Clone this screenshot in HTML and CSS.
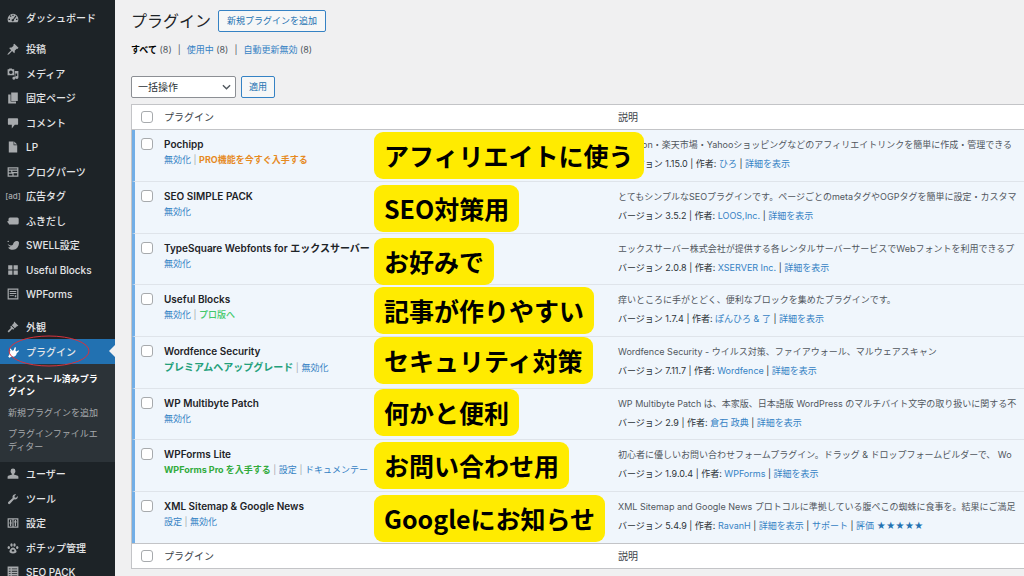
FILE: index.html
```html
<!DOCTYPE html>
<html lang="ja">
<head>
<meta charset="utf-8">
<title>プラグイン</title>
<link rel="stylesheet" href="styles.css">
</head>
<body>
<div class="layout">
<nav class="sidebar">
  <ul class="menu">
    <li><a href="#"><svg viewBox="0 0 20 20"><path fill-rule="evenodd" d="M10 3a9 9 0 0 0-9 9c0 2 .6 3.700 1.500 5h15c1-1.300 1.500-3 1.500-5a9 9 0 0 0-9-9zM9 4.500h2v2.200H9zM4.600 6.700l1.500-1.300 1.500 1.700-1.500 1.300zM2.700 11.200H5v2H2.700zM15 11.200h2.300v2H15zM14.300 5.800l1.300 1.500-4 5.200c.5 2-1 3-2 3-1.600 0-2.500-1.700-1.500-3 .5-.7 1.300-1 2.200-1z"/></svg>ダッシュボード</a></li>
  </ul>
  <ul class="menu menu-main">
    <li><a href="#"><svg viewBox="0 0 20 20"><path d="M10.400 3l1.900-1.900 6.900 6.900-1.900 1.900-1.200-.4-3.300 3.300c.5 1.700.2 3.200-.8 4.200l-3.500-3.500-4.700 4.700c-.8.800-2.600 1.700-2.900 1.400s.6-2.100 1.400-2.900L7 12 3.500 8.500c1-1 2.500-1.300 4.200-.8L11 4.400z"/></svg>投稿</a></li>
    <li><a href="#"><svg viewBox="0 0 20 20"><path fill-rule="evenodd" d="M1 2h2l1-1h4l1 1h3v10H1zM6.500 4a3 3 0 1 0 0 6 3 3 0 0 0 0-6zM13 5h6v11a2.500 2.500 0 1 1-2-2.500V9h-3v8a2.500 2.500 0 1 1-2-2.500h1z"/></svg>メディア</a></li>
    <li><a href="#"><svg viewBox="0 0 20 20"><path d="M7 1h11v14H7zM2 4h4v12h9v3H2z"/></svg>固定ページ</a></li>
    <li><a href="#"><svg viewBox="0 0 20 20"><path d="M3 2h14q1.500 0 1.500 1.500v8q0 1.500-1.500 1.500h-4l-5 6v-6H3q-1.500 0-1.500-1.500v-8Q1.500 2 3 2z"/></svg>コメント</a></li>
    <li><a href="#"><svg viewBox="0 0 20 20"><path d="M3 1h8v6h6v12H3zM12 1l5 5h-5z"/></svg>LP</a></li>
    <li><a href="#"><svg viewBox="0 0 20 20"><path fill-rule="evenodd" d="M1 2h18v16H1zM3 4v2h14V4zM3 8v3h4V8zM9 8v2h8V8zM3 13v3h6v-3zM11 12v4h6v-4z"/></svg>ブログパーツ</a></li>
    <li><a href="#"><span class="ad-icon" aria-hidden="true">[ad]</span>広告タグ</a></li>
    <li><a href="#"><svg viewBox="0 0 20 20"><path d="M5 4h12q2.500 0 2.500 2.500v7q0 2.500-2.500 2.500H5q-2 0-2.300-2L0 11l2.500-1V6.500Q2.500 4 5 4z"/></svg>ふきだし</a></li>
    <li><a href="#"><svg viewBox="0 0 20 20"><circle cx="2" cy="4" r="1.200"/><path d="M1 8c3 3 7 4 9 1 1-5 5-7 9-5l1 2c0 7-4 12-10 12-4 0-7-2-8-4 2 0 3 0 4-1-3-1-4-3-5-5z"/></svg>SWELL設定</a></li>
    <li><a href="#"><svg viewBox="0 0 20 20"><path d="M2 2h7v7H2zM11 2h7v7h-7zM2 11h7v7H2zM11 11h7v7h-7z"/></svg>Useful Blocks</a></li>
    <li><a href="#"><svg viewBox="0 0 20 20"><path fill-rule="evenodd" d="M1 1h18v18H1zM3 3v14h14V3zM4.500 5h11v1.500h-11zM4.500 8.500h11V10h-11zM4.500 12h7v1.500h-7zM13 12h2.500v3.500H13z"/></svg>WPForms</a></li>
  </ul>
  <ul class="menu menu-lower">
    <li><a href="#"><svg viewBox="0 0 20 20"><path d="M12 1l7 7-3 1-3 3-5-5 3-3zM7 8l5 5-1.500 1.500-2-1L3 19l-2-2 5.500-5.500-1-2z"/></svg>外観</a></li>
    <li class="current"><a href="#"><svg viewBox="0 0 20 20"><path d="M6 4l3 4 2-1 2-5 2 .5-1 5 1.500 1.500L19 7l1 1.500-4 4c0 4-4 6-8 5l-4 2-2-2 2-3c-1-3 0-5 2-6L4.500 5z"/></svg>プラグイン</a>
      <svg class="ring" viewBox="0 0 82 32" aria-hidden="true"><ellipse cx="41" cy="16" rx="40" ry="15"/></svg></li>
  </ul>
  <ul class="submenu">
    <li><a class="active" href="#">インストール済みプラグイン</a></li>
    <li><a href="#">新規プラグインを追加</a></li>
    <li><a href="#">プラグインファイルエディター</a></li>
  </ul>
  <ul class="menu">
    <li><a href="#"><svg viewBox="0 0 20 20"><path d="M10 1a4 4 0 0 1 4 4c0 2-1 4.500-2.500 5.200V11L18 13q1 .5 1 2v3H1v-3q0-1.500 1-2l6.500-2v-.8C7 9.500 6 7 6 5a4 4 0 0 1 4-4z"/></svg>ユーザー</a></li>
    <li><a href="#"><svg viewBox="0 0 20 20"><path d="M16.700 9.600c-1.300 1.300-3.200 1.600-4.800 1L5 17.900c-.9.900-2 .9-2.800.1-.8-.8-.8-2 0-2.800L9.500 8.300c-.6-1.600-.3-3.500 1-4.800 1.300-1.300 3.100-1.600 4.700-1L12.500 5.200l.4 2.200 2.200.4 2.700-2.700c.5 1.500.2 3.300-1.100 4.500z"/></svg>ツール</a></li>
    <li><a href="#"><svg viewBox="0 0 20 20"><path fill-rule="evenodd" d="M1 2h18v16H1zM3 4v12h6V4zM11 4v12h6V4zM5 5h2v4h1v2H7v4H5v-4H4V9h1zM13 5h2v2h1v2h-1v6h-2V9h-1V7h1z"/></svg>設定</a></li>
    <li><a href="#"><svg viewBox="0 0 20 20"><ellipse cx="3" cy="9" rx="2" ry="2.500"/><ellipse cx="7.500" cy="5" rx="2" ry="3"/><ellipse cx="12.500" cy="5" rx="2" ry="3"/><ellipse cx="17" cy="9" rx="2" ry="2.500"/><path fill-rule="evenodd" d="M10 9c3 0 6 5 6 7s-2 3-6 3-6-1-6-3 3-7 6-7zM8 13v3h4v-3z"/></svg>ポチップ管理</a></li>
    <li><a href="#"><svg viewBox="0 0 20 20"><path fill-rule="evenodd" d="M1 1h18v18H1zM3 4v1.500h3V4zM8 4v1.500h9V4zM3 8v1.500h3V8zM8 8v1.500h9V8zM3 12v1.500h3V12zM8 12v1.500h9V12zM3 16v1.500h3V16zM8 16v1.500h9V16z"/></svg>SEO PACK</a></li>
  </ul>
</nav>
<main class="content">
  <header class="title-row">
    <h1>プラグイン</h1>
    <button class="button button-wide" type="button">新規プラグインを追加</button>
  </header>
  <div class="filters"><a class="all" href="#">すべて</a> (8)<i>|</i><a href="#">使用中</a> (8)<i>|</i><a href="#">自動更新無効</a> (8)</div>
  <div class="bulk">
    <div class="select-box">
      <select aria-label="一括操作を選択"><option>一括操作</option></select>
      <svg viewBox="0 0 10 6" aria-hidden="true"><path d="M1 1l4 4 4-4"/></svg>
    </div>
    <button class="button" type="button">適用</button>
  </div>
  <table class="plugins">
    <colgroup><col class="col-check"><col class="col-name"><col></colgroup>
    <thead><tr><td><input type="checkbox" aria-label="すべて選択"></td><th scope="col">プラグイン</th><th scope="col">説明</th></tr></thead>
    <tbody>
      <tr>
        <td><input type="checkbox" aria-label="Pochipp を選択"></td>
        <td><strong>Pochipp</strong><div class="actions"><a href="#">無効化</a> | <a class="pro orange" href="#">PRO機能を今すぐ入手する</a></div><span class="note drop-2">アフィリエイトに使う</span></td>
        <td><p>Amazon・楽天市場・Yahooショッピングなどのアフィリエイトリンクを簡単に作成・管理できる</p><div class="meta">バージョン 1.15.0 | 作者: <a href="#">ひろ</a> | <a href="#">詳細を表示</a></div></td>
      </tr>
      <tr>
        <td><input type="checkbox" aria-label="SEO SIMPLE PACK を選択"></td>
        <td><strong>SEO SIMPLE PACK</strong><div class="actions"><a href="#">無効化</a></div><span class="note drop-3">SEO対策用</span></td>
        <td><p>とてもシンプルなSEOプラグインです。ページごとのmetaタグやOGPタグを簡単に設定・カスタマ</p><div class="meta">バージョン 3.5.2 | 作者: <a href="#">LOOS,Inc.</a> | <a href="#">詳細を表示</a></div></td>
      </tr>
      <tr>
        <td><input type="checkbox" aria-label="TypeSquare Webfonts を選択"></td>
        <td><strong>TypeSquare Webfonts for エックスサーバー</strong><div class="actions"><a href="#">無効化</a></div><span class="note drop-4">お好みで</span></td>
        <td><p>エックスサーバー株式会社が提供する各レンタルサーバーサービスでWebフォントを利用できるプ</p><div class="meta">バージョン 2.0.8 | 作者: <a href="#">XSERVER Inc.</a> | <a href="#">詳細を表示</a></div></td>
      </tr>
      <tr>
        <td><input type="checkbox" aria-label="Useful Blocks を選択"></td>
        <td><strong>Useful Blocks</strong><div class="actions"><a href="#">無効化</a> | <a class="pro lime" href="#">プロ版へ</a></div><span class="note drop-2">記事が作りやすい</span></td>
        <td><p>痒いところに手がとどく、便利なブロックを集めたプラグインです。</p><div class="meta">バージョン 1.7.4 | 作者: <a href="#">ぽんひろ &amp; 了</a> | <a href="#">詳細を表示</a></div></td>
      </tr>
      <tr>
        <td><input type="checkbox" aria-label="Wordfence Security を選択"></td>
        <td><strong>Wordfence Security</strong><div class="actions"><a class="pro teal" href="#">プレミアムへアップグレード</a> | <a href="#">無効化</a></div><span class="note">セキュリティ対策</span></td>
        <td><p>Wordfence Security - ウイルス対策、ファイアウォール、マルウェアスキャン</p><div class="meta">バージョン 7.11.7 | 作者: <a href="#">Wordfence</a> | <a href="#">詳細を表示</a></div></td>
      </tr>
      <tr>
        <td><input type="checkbox" aria-label="WP Multibyte Patch を選択"></td>
        <td><strong>WP Multibyte Patch</strong><div class="actions"><a href="#">無効化</a></div><span class="note">何かと便利</span></td>
        <td><p>WP Multibyte Patch は、本家版、日本語版 WordPress のマルチバイト文字の取り扱いに関する不</p><div class="meta">バージョン 2.9 | 作者: <a href="#">倉石 政典</a> | <a href="#">詳細を表示</a></div></td>
      </tr>
      <tr>
        <td><input type="checkbox" aria-label="WPForms Lite を選択"></td>
        <td><strong>WPForms Lite</strong><div class="actions"><a class="pro green" href="#">WPForms Pro を入手する</a> | <a href="#">設定</a> | <a href="#">ドキュメンテー</a></div><span class="note drop-2">お問い合わせ用</span></td>
        <td><p>初心者に優しいお問い合わせフォームプラグイン。ドラッグ &amp; ドロップフォームビルダーで、 Wo</p><div class="meta">バージョン 1.9.0.4 | 作者: <a href="#">WPForms</a> | <a href="#">詳細を表示</a></div></td>
      </tr>
      <tr>
        <td><input type="checkbox" aria-label="XML Sitemap を選択"></td>
        <td><strong>XML Sitemap &amp; Google News</strong><div class="actions"><a href="#">設定</a> | <a href="#">無効化</a></div><span class="note drop-3">Googleにお知らせ</span></td>
        <td><p>XML Sitemap and Google News プロトコルに準拠している腹ペこの蜘蛛に食事を。結果にご満足</p><div class="meta">バージョン 5.4.9 | 作者: <a href="#">RavanH</a> | <a href="#">詳細を表示</a> | <a href="#">サポート</a> | <a href="#">評価 <span class="stars">★★★★★</span></a></div></td>
      </tr>
    </tbody>
    <tfoot><tr><td><input type="checkbox" aria-label="すべて選択"></td><th scope="col">プラグイン</th><th scope="col">説明</th></tr></tfoot>
  </table>
</main>
</div>
</body>
</html>
```
FILE: styles.css
```css
* { box-sizing: border-box; }
body {
  margin: 0;
  background: #f0f0f1;
  color: #3c434a;
  font: 9px/14px Inter, "Noto Sans CJK JP", sans-serif;
}
a { color: #3582c4; text-decoration: none; }
ul { list-style: none; margin: 0; padding: 0; }
h1, p { margin: 0; font-weight: 400; }
button, select, input { font: inherit; margin: 0; }
.layout { display: flex; height: 100vh; overflow: hidden; }

.sidebar { flex: 0 0 115px; background: #1d2327; padding-top: 6px; }
.menu { margin-bottom: 7px; font-size: 10px; font-weight: 500; }
.menu li { position: relative; }
.menu a { display: flex; align-items: center; gap: 7px; height: 24px; padding-left: 7px; color: #e4e5e7; white-space: nowrap; }
.menu li:nth-child(even) a { height: 25px; }
.menu a svg { flex: none; width: 12px; height: 12px; fill: #a7aaad; }
.menu-main { margin-bottom: 9px; }
.menu-lower { margin-bottom: 0; }
.ad-icon { width: 14px; margin: 0 -1px; color: #a7aaad; font-size: 8px; display: flex; justify-content: center; }
.current { background: #2271b1; }
.menu .current a svg { fill: #fff; }
.current::after {
  content: "";
  position: absolute;
  right: 0;
  top: 6px;
  border: 6px solid transparent;
  border-left: 0;
  border-right-color: #f0f0f1;
}
.ring { position: absolute; left: 8px; top: -4px; width: 82px; height: 32px; fill: none; stroke: #d8323c; }
.submenu { background: #2c3338; padding: 8px 12px 1px 8px; }
.submenu li { line-height: 13px; margin-bottom: 8px; }
.submenu a { color: #a7aaad; }
.submenu .active { color: #fff; font-weight: 700; }

.content { flex: 1; min-width: 0; padding: 10px 0 0 16px; }
.title-row { display: flex; align-items: center; gap: 7px; }
h1 { font-size: 16px; line-height: 22px; color: #1d2327; }
.button { height: 22px; padding: 0 7px; border: 1px solid #3582c4; border-radius: 2px; background: #f6f7f7; color: #2271b1; white-space: nowrap; }
.button-wide { padding: 0 8px; }
.filters { margin: 11px 0 19px; color: #50575e; }
.filters i { font-style: normal; margin: 0 6px; }
.filters .all { color: #000; font-weight: 700; }
.bulk { display: flex; gap: 5px; margin-bottom: 6px; }
.select-box { position: relative; }
.select-box select { appearance: none; width: 105px; height: 22px; padding: 0 6px; border: 1px solid #8c8f94; border-radius: 2px; background: #fff; color: #2c3338; font-size: 10px; }
.select-box svg { position: absolute; right: 5px; top: 8px; width: 9px; height: 6px; fill: none; stroke: #50575e; stroke-width: 1.500; pointer-events: none; }

.plugins { width: 100%; table-layout: fixed; border-collapse: separate; border-spacing: 0; border: 1px solid #c3c4c7; border-right: 0; background: #fff; white-space: nowrap; }
.col-check { width: 32px; }
.col-name { width: 454px; }
.plugins td, .plugins th { padding: 0; text-align: left; }
.plugins th { height: 25px; font-size: 10px; font-weight: 400; }
.plugins input { appearance: none; display: block; width: 12px; height: 12px; margin-left: 9px; border: 1px solid #a7aaad; border-radius: 3px; background: #fff; }
thead td, thead th { border-bottom: 1px solid #c3c4c7; }
tfoot td, tfoot th { border-top: 1px solid #c3c4c7; }
tbody tr { height: 52px; background: #f0f6fc; }
tbody tr:first-child, tbody tr:nth-child(3n) { height: 51px; }
.plugins tbody td { position: relative; padding-top: 7px; vertical-align: top; }
.plugins tbody tr + tr td { border-top: 1px solid #dfe4ea; }
.plugins tbody td:first-child { border-left: 3px solid #72aee6; padding-top: 8px; }
.plugins tbody input { margin-left: 6px; }
tbody strong { display: block; color: #1d2327; font-size: 10px; font-weight: 600; line-height: 15px; }
.actions { line-height: 16px; color: #a7aaad; }
.pro { font-weight: 700; }
.orange { color: #e68a1f; }
.lime { color: #42c96a; font-weight: 500; }
.teal { color: #22a07a; font-size: 10px; }
.green { color: #32ab3c; }
tbody p { line-height: 15px; color: #50575e; }
.meta { padding-top: 4px; line-height: 15px; color: #2c3338; }
.stars { color: #2271b1; }
.note {
  position: absolute;
  left: 210px;
  top: 0;
  z-index: 1;
  padding: 0 10px;
  border-radius: 9px;
  background: #ffeb00;
  color: #000;
  font: 700 25px/47px "Noto Sans CJK JP", sans-serif;
}
.drop-2 { top: 2px; }
.drop-3 { top: 3px; }
.drop-4 { top: 4px; }
```
